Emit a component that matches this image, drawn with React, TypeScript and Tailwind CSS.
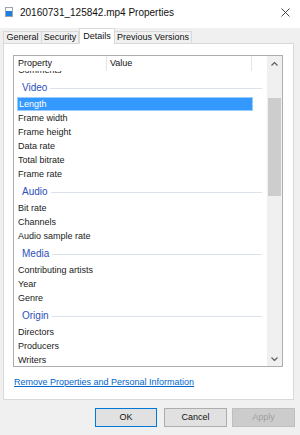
import React from 'react';

type Row = { kind: 'item' | 'group'; label: string; selected?: boolean };

const rows: Row[] = [
    { kind: 'item', label: 'Comments' },
    { kind: 'group', label: 'Video' },
    { kind: 'item', label: 'Length', selected: true },
    { kind: 'item', label: 'Frame width' },
    { kind: 'item', label: 'Frame height' },
    { kind: 'item', label: 'Data rate' },
    { kind: 'item', label: 'Total bitrate' },
    { kind: 'item', label: 'Frame rate' },
    { kind: 'group', label: 'Audio' },
    { kind: 'item', label: 'Bit rate' },
    { kind: 'item', label: 'Channels' },
    { kind: 'item', label: 'Audio sample rate' },
    { kind: 'group', label: 'Media' },
    { kind: 'item', label: 'Contributing artists' },
    { kind: 'item', label: 'Year' },
    { kind: 'item', label: 'Genre' },
    { kind: 'group', label: 'Origin' },
    { kind: 'item', label: 'Directors' },
    { kind: 'item', label: 'Producers' },
    { kind: 'item', label: 'Writers' },
];

const tabs = [
    { label: 'General', w: 'w-[39px]' },
    { label: 'Security', w: 'w-[38px]' },
    { label: 'Details', w: 'w-[36px]', active: true },
    { label: 'Previous Versions', w: 'w-[78px]' },
];

const FileIcon = () => (
    <svg width="8" height="10" viewBox="0 0 8 10" className="shrink-0">
        <rect x="0.5" y="0.5" width="7" height="9" fill="#ffffff" stroke="#9aa4b0" />
        <rect x="1" y="4" width="6" height="5" fill="#1f7fe0" />
    </svg>
);

const Chevron = ({ down }: { down?: boolean }) => (
    <svg width="7" height="4" viewBox="0 0 7 4">
        <path d={down ? 'M0.5 0.5 L3.5 3.5 L6.5 0.5' : 'M0.5 3.5 L3.5 0.5 L6.5 3.5'} fill="none" stroke="#606060" strokeWidth="1.2" />
    </svg>
);

const ListRow: React.FC<{ row: Row }> = ({ row }) => {
    if (row.kind === 'group') {
        return (
            <div className="h-[20px] flex items-end pb-[2px] pl-[8px] w-[248px]">
                <span className="text-[10px] leading-[14px] text-[#2d4fb8]">{row.label}</span>
                <div className="flex-1 ml-[3px] mb-[6px] h-px bg-[#dbe2ee]" />
            </div>
        );
    }
    return (
        <div
            className={`h-[14px] ml-[3px] w-[236px] pl-[1px] flex items-center text-[9px] leading-[14px] ${
                row.selected ? 'bg-[#3399ff] text-white border border-[#99ccff] pl-0' : 'text-[#1a1a1a]'
            }`}
        >
            {row.label}
        </div>
    );
};

export default function App() {
    return (
        <div className="w-[300px] h-[435px] bg-[#f0f0f0] flex flex-col overflow-hidden" style={{ fontFamily: '"Liberation Sans", Arial, sans-serif' }}>
            {/* title bar */}
            <div className="h-[28px] bg-white flex items-center pl-[5px] pr-[10px] pb-[4px]">
                <FileIcon />
                <span className="ml-[7px] text-[10px] text-[#111] flex-1">20160731_125842.mp4 Properties</span>
                <svg width="9" height="9" viewBox="0 0 9 9">
                    <path d="M0.5 0.5 L8.5 8.5 M8.5 0.5 L0.5 8.5" stroke="#333" strokeWidth="0.9" />
                </svg>
            </div>

            {/* tabs */}
            <div className="h-[15px] flex items-end pl-[3px]">
                {tabs.map((t) =>
                    t.active ? (
                        <div
                            key={t.label}
                            className={`${t.w} h-[16px] relative z-10 -mb-px bg-white border border-b-0 border-[#d9d9d9] flex items-center justify-center text-[9px] text-[#111]`}
                        >
                            {t.label}
                        </div>
                    ) : (
                        <div
                            key={t.label}
                            className={`${t.w} h-[12px] border border-b-0 border-[#d9d9d9] -ml-px first:ml-0 flex items-center justify-center text-[9px] text-[#111]`}
                        >
                            {t.label}
                        </div>
                    )
                )}
            </div>

            {/* panel */}
            <div className="ml-[3px] w-[291px] h-[357px] bg-white border border-[#d9d9d9] pl-[9px] pt-[11px] flex flex-col">
                <div className="w-[270px] h-[312px] border border-[#adadad] flex">
                    <div className="flex-1 flex flex-col overflow-hidden">
                        <div className="h-[15px] flex text-[9px] text-[#111] shrink-0 relative z-10 bg-white">
                            <div className="w-[93px] pl-[4px] flex items-center border-r border-[#e5e5e5]">Property</div>
                            <div className="w-[145px] pl-[3px] flex items-center border-r border-[#e5e5e5]">Value</div>
                        </div>
                        <div className="flex-1 overflow-hidden">
                            <div className="-mt-[8px] flex flex-col">
                                {rows.map((r) => (
                                    <ListRow key={r.label} row={r} />
                                ))}
                            </div>
                        </div>
                    </div>
                    {/* scrollbar */}
                    <div className="w-[15px] bg-[#f0f0f0] flex flex-col">
                        <div className="h-[15px] flex items-center justify-center">
                            <Chevron />
                        </div>
                        <div className="h-[27px]" />
                        <div className="h-[98px] bg-[#cdcdcd] mx-px" />
                        <div className="flex-1" />
                        <div className="h-[15px] flex items-center justify-center">
                            <Chevron down />
                        </div>
                    </div>
                </div>
                <div className="mt-[9px] pl-px text-[9px] text-[#0066cc] underline">Remove Properties and Personal Information</div>
            </div>

            {/* buttons */}
            <div className="mt-[8px] flex justify-end pr-[5px]">
                <button className="w-[62px] h-[19px] bg-[#e1e1e1] border border-[#0078d7] text-[9px] text-[#111]">OK</button>
                <button className="ml-[7px] w-[63px] h-[19px] bg-[#e1e1e1] border border-[#adadad] text-[9px] text-[#111]">Cancel</button>
                <button className="ml-[5px] w-[63px] h-[19px] bg-[#cccccc] border border-[#bfbfbf] text-[9px] text-[#a0a0a0]">Apply</button>
            </div>
        </div>
    );
}
